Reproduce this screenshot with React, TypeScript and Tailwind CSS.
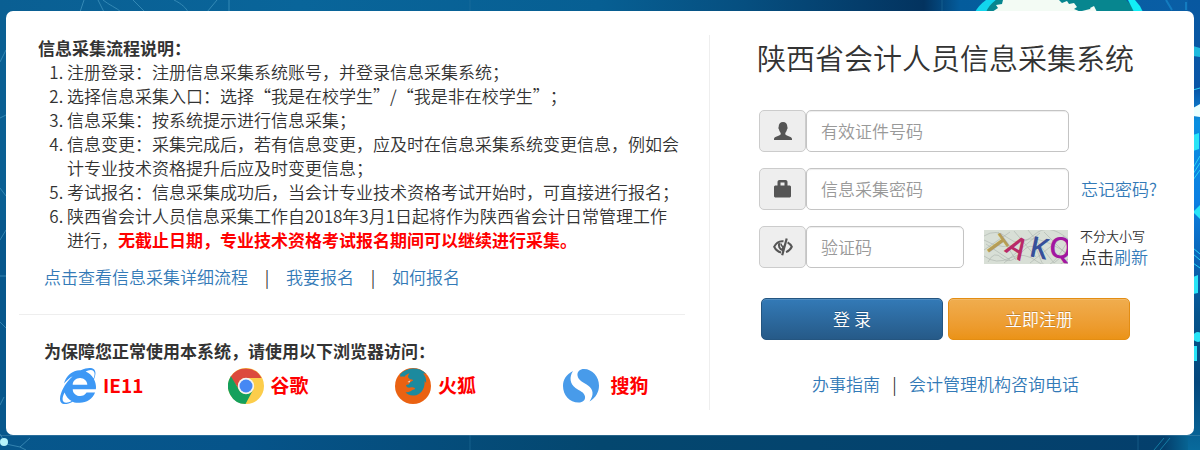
import React from "react";
import { FaInternetExplorer } from "react-icons/fa";

const link = "text-[#337ab7] hover:underline";

function Backdrop() {
  return (
    <svg
      aria-hidden="true"
      className="absolute inset-0 h-full w-full"
      viewBox="0 0 1200 450"
      preserveAspectRatio="none"
    >
      <defs>
        <linearGradient id="sky" x1="0" x2="1" y1="0" y2="0">
          <stop offset="0" stopColor="#0a5f93" />
          <stop offset="0.25" stopColor="#09659a" />
          <stop offset="0.5" stopColor="#075f93" />
          <stop offset="0.62" stopColor="#064f80" />
          <stop offset="0.77" stopColor="#03335f" />
          <stop offset="0.8" stopColor="#045c9c" />
          <stop offset="1" stopColor="#0a5ea6" />
        </linearGradient>
        <linearGradient id="ground" x1="0" x2="1" y1="0" y2="0">
          <stop offset="0" stopColor="#07578c" />
          <stop offset="0.2" stopColor="#06548a" />
          <stop offset="0.5" stopColor="#04476f" />
          <stop offset="0.97" stopColor="#043f6c" />
          <stop offset="1" stopColor="#0876a6" />
        </linearGradient>
        <linearGradient id="rightEdge" x1="0" x2="0" y1="0" y2="1">
          <stop offset="0" stopColor="#0858a0" />
          <stop offset="0.2" stopColor="#0a56a8" />
          <stop offset="0.27" stopColor="#0a8fe0" />
          <stop offset="0.45" stopColor="#0b7fe2" />
          <stop offset="0.58" stopColor="#0a63b4" />
          <stop offset="0.7" stopColor="#06548c" />
          <stop offset="0.85" stopColor="#04477c" />
          <stop offset="1" stopColor="#086a9c" />
        </linearGradient>
      </defs>
      <rect width="1200" height="220" fill="url(#sky)" />
      <rect y="220" width="1200" height="230" fill="url(#ground)" />
      <rect x="1188" width="12" height="450" fill="url(#rightEdge)" />
      <g fill="none" stroke="#5fb0d4" strokeWidth="1" opacity="0.5">
        <path d="M84 0l-4 12M98 0l6 12M103 0c6 5 14 8 18 12M133 0l12 12M174 0c8 4 12 8 14 12M217 0l-10 12M229 0v12" />
        <path d="M0 62l6 -12M0 118l6 -3M0 188l6 8M0 240l6 -10M0 276h6M0 322l6 6M0 405l4 -8M0 434l6 10 14 3 10-9M20 447l6 3" />
      </g>
      <path d="M470 0v12M942 0v12M470 435v15M1138 435v15" stroke="#27749f" opacity="0.5" />
      <circle cx="4" cy="442" r="4" fill="#b6f3fb" />
      <path d="M975 12q4-7 11-12h10l-10 12z" fill="#12d6ee" />
      <path d="M986 12q3-7 10-12h130l12 12z" fill="#07868f" />
      <path d="M1128 0h7q5 5 8 12h-9z" fill="#12eef6" />
      <path
        d="M992 12l6-4-2-3 6-1 1-4h56l3 3 5-2 2 3 5-1 3 4-3 2 7 3h-4l7 0z"
        fill="#f3fbf4"
      />
      <path d="M1090 8l4-2 3 6h-5zM1082 11l8-2 6 3z" fill="#f3fbf4" />
      <path d="M1166 0l6 10M1186 2v8" stroke="#1d9bdc" strokeWidth="2" opacity="0.5" />
      <g fill="#29e4f7">
        <path d="M1193 46l7 2v9l-7-1z" opacity="0.7" />
        <path d="M1193 108l7-4v13l-7-1z" fill="#e9ffff" />
        <path d="M1193 135l6-2v16l-6 2z" />
        <path d="M1193 212l7-7v14z" />
        <path d="M1193 277l5-2v18l-5 1z" />
        <circle cx="1198" cy="337" r="5" />
        <path d="M1193 346h4v15h-4z" />
      </g>
      <g fill="none" stroke="#2cd3f4" strokeWidth="1">
        <path d="M1193 90l7-2M1193 168l7-12M1193 174l7-11M1193 180l7-10M1193 248l7 6M1193 254l7 6M1193 263l7 5" />
        <path d="M1154 450l10-12M1160 450l10-12" opacity="0.4" />
      </g>
      <rect y="435" width="1200" height="1" fill="#5c93b3" opacity="0.4" />
    </svg>
  );
}

function UserIcon() {
  return (
    <svg viewBox="0 0 18 18" className="h-[18px] w-[18px]" fill="#555">
      <path d="M9 0C6.3 0 4.7 1.9 4.7 4.6c0 .7-.3.7-.3 1.4 0 .8.5 1 .7 1.8.3 1.4.9 2.3 1.6 3.2v1.300C6.500 13.900 0 14.300 0 17v1h18v-1c0-2.700-6.500-3.100-6.700-4.700V11c.7-.9 1.3-1.8 1.6-3.200.2-.8.7-1 .7-1.800 0-.7-.3-.7-.3-1.400C13.300 1.900 11.700 0 9 0z" />
    </svg>
  );
}

function LockIcon() {
  return (
    <svg viewBox="0 0 18 18" className="h-[18px] w-[18px]" fill="#555">
      <path
        fillRule="evenodd"
        d="M3.500 5.500V2C3.500.8 4.300 0 5.500 0h6c1.200 0 2 .8 2 2v3.500H16l1 1V16.500l-1 1H1l-1-1v-10l1-1zM6.500 5.500h4V2.500h-4z"
      />
    </svg>
  );
}

function EyeClosedIcon() {
  return (
    <svg viewBox="0 0 20 18" className="h-[18px] w-5" fill="none" stroke="#555">
      <path d="M10.500 3.300C6.500 2.700 3 5.200 1.200 8.800c1.400 2.900 4 5 6.900 5.700" strokeWidth="2" />
      <path d="M14.600 4.300c1.900 1 3.300 2.600 4.200 4.500-1.200 2.500-3.200 4.400-5.800 5.300" strokeWidth="2" />
      <path d="M6.500 5c-1.600 3 .2 6.200 3 7l1-4.200" strokeWidth="2" />
      <path d="M8.200 5.500c-.3 1.600.4 2.800 2 3.200" strokeWidth="1.500" />
      <path d="M13.700.5L9.200 17.300" strokeWidth="2.200" />
    </svg>
  );
}

function ChromeIcon() {
  return (
    <svg viewBox="0 0 36 36" className="h-9 w-9 shrink-0">
      <circle cx="18" cy="18" r="18" fill="#fccd4b" />
      <path d="M2.400 9A18 18 0 0 1 33.600 10H18a8 8 0 0 0-7.500 10.500z" fill="#dc4a3d" />
      <path d="M2.900 8.200A18 18 0 0 0 17.500 36L25 22a8 8 0 0 1-14.400-.9z" fill="#14a05c" />
      <circle cx="18" cy="18" r="8.200" fill="#f4f4f4" />
      <circle cx="18" cy="18" r="6.500" fill="#4688f4" />
    </svg>
  );
}

function FirefoxIcon() {
  return (
    <svg viewBox="0 0 36 36" className="h-9 w-9 shrink-0">
      <circle cx="18" cy="18" r="18" fill="#ea6212" />
      <path
        d="M5 6.500A18 18 0 0 1 31 5.500l-3 0c3 3 3.500 7 3 9.500-.5-1-1-1.600-1.500-2 .8 7-3.500 14-10.500 14.500-4 .3-7-1.300-8.500-3.500 3 .6 5-.3 6.500-1.700 1.500-1.200 2.800-.5 3-1.300.2-1-1.500-2.300-3.800-1.700-2.500.7-4.200.5-5.200-1.800.5-1 1.500-1.300 3-1l.5-1.800 3.500-2.200c.5-1-2-1.200-3-1.200l-2-2c0-1.500.7-3 1.700-4-2.500.6-4.200 2-5.200 3.400C7.800 8.500 6.500 8.500 5.500 9z"
        fill="#1c8a9e"
      />
      <path d="M12.500 14l3-1.800-1 2.300z" fill="#f3dcc5" />
    </svg>
  );
}

function SogouIcon() {
  return (
    <svg viewBox="0 0 36 36" className="h-9 w-9 shrink-0" fill="#489bea">
      <path d="M10 3C3 6.500 0 12 0 18c0 9 6.500 16.500 15.500 16.500 4.500 0 7-2.500 6.500-6-.7-4.500-5.500-5.500-9.500-8.500C7 16 6 9 10 3z" />
      <path d="M14.500 7.500C14 3.500 17 1 21 1c8.500 0 15 8 15 16.500 0 6.500-3 12-9.500 16C31 27 30.500 21.500 25 17.500 20.500 14.300 15.200 12.500 14.500 7.500z" />
    </svg>
  );
}

function Captcha() {
  return (
    <svg
      role="img"
      aria-label="验证码图片"
      viewBox="0 0 84 34"
      className="h-[34px] w-[84px] shrink-0"
    >
      <rect width="84" height="34" fill="#d8dfd6" />
      <g fill="none" stroke="#a3aaa4" strokeWidth="0.5">
        <path d="M0 6q12-8 24 2t26-3 34 4M0 26q12 9 26 2t28 4 30-3M2 14l24 16M14 2l18 28M30 1l22 26M44 0l26 33M60 2l22 22M0 20L26 2M20 33L56 3M46 33L80 6M70 33l14-12" />
        <path d="M4 32q6-12 14-4t20-6 18 6 26-14M0 10q20 12 36 2t48 12" />
      </g>
      <g
        fontFamily="'Open Sans', 'Noto Sans', sans-serif"
        fontWeight="600"
        fontSize="29"
        textAnchor="middle"
      >
        <text transform="translate(4 21) rotate(54)" fill="#b59d56">T</text>
        <text transform="translate(28 26) rotate(32)" fill="#b92a68">A</text>
        <text transform="translate(53 28) rotate(12)" fill="#36509a">K</text>
        <text transform="translate(76 28) rotate(4)" fill="#a217a0">Q</text>
      </g>
    </svg>
  );
}

interface FieldProps {
  id: string;
  label: string;
  type?: string;
  width: string;
  icon: React.ReactNode;
}

function Field({ id, label, type = "text", width, icon }: FieldProps) {
  return (
    <div className={`flex h-[42px] ${width}`}>
      <label
        htmlFor={id}
        aria-label={label}
        className="flex w-[47px] shrink-0 items-center justify-center rounded-[5px] border border-[#ccc] bg-[#eee]"
      >
        {icon}
      </label>
      <input
        id={id}
        type={type}
        placeholder={label}
        className="min-w-0 flex-1 rounded-[5px] border border-[#c4c4c4] bg-white px-[14px] text-[17px] font-[350] shadow-[inset_0_1px_1px_rgba(0,0,0,0.075)] outline-none placeholder:text-[#999]"
      />
    </div>
  );
}

const steps: React.ReactNode[] = [
  "注册登录：注册信息采集系统账号，并登录信息采集系统；",
  "选择信息采集入口：选择“我是在校学生”/“我是非在校学生”；",
  "信息采集：按系统提示进行信息采集；",
  "信息变更：采集完成后，若有信息变更，应及时在信息采集系统变更信息，例如会计专业技术资格提升后应及时变更信息；",
  "考试报名：信息采集成功后，当会计专业技术资格考试开始时，可直接进行报名；",
  <>
    陕西省会计人员信息采集工作自2018年3月1日起将作为陕西省会计日常管理工作进行，
    <strong className="font-bold text-[#f00]">
      无截止日期，专业技术资格考试报名期间可以继续进行采集。
    </strong>
  </>,
];

const browsers = [
  { name: "IE11", icon: <FaInternetExplorer className="h-9 w-9 shrink-0 text-[#3d98f5]" />, gap: "gap-[7px]" },
  { name: "谷歌", icon: <ChromeIcon />, gap: "gap-[7px]" },
  { name: "火狐", icon: <FirefoxIcon />, gap: "gap-[7px]" },
  { name: "搜狗", icon: <SogouIcon />, gap: "gap-3" },
];

const buttonBase =
  "h-[42px] flex-1 rounded-[5px] border text-[17px] text-white shadow-[inset_0_1px_0_rgba(255,255,255,0.15)] [text-shadow:0_-1px_0_rgba(0,0,0,0.2)]";

export default function App() {
  return (
    <div
      lang="zh-CN"
      className="relative flex min-h-screen flex-col bg-[#075a8f] px-[6px] pt-[11px] pb-[15px] font-['Noto_Sans_CJK_SC',sans-serif] text-[17px] leading-6 font-[350] text-[#333] [text-spacing-trim:space-all]"
    >
      <Backdrop />
      <main className="relative flex flex-1 rounded-[7px] bg-white pt-6 pb-[25px]">
        <section className="min-w-0 flex-1 border-r border-[#eee] pr-6 pl-[13px]">
          <h2 className="pt-px pl-[19px] font-bold">信息采集流程说明：</h2>
          <ol className="list-decimal pr-1 pl-12">
            {steps.map((step, i) => (
              <li key={i}>{step}</li>
            ))}
          </ol>
          <nav className="mt-[13px] flex pl-[25px]">
            <a href="#process" className={link}>点击查看信息采集详细流程</a>
            <span className="w-[38px] text-center">|</span>
            <a href="#apply" className={link}>我要报名</a>
            <span className="w-[38px] text-center">|</span>
            <a href="#how" className={link}>如何报名</a>
          </nav>
          <hr className="mt-[25px] border-[#eee]" />
          <h2 className="mt-6 pl-[25px] font-bold">
            为保障您正常使用本系统，请使用以下浏览器访问：
          </h2>
          <ul className="mt-[5px] -mr-[45px] grid grid-cols-4 pl-[41px] text-[19px] font-bold text-[#f00]">
            {browsers.map((b) => (
              <li key={b.name} className={`flex items-center ${b.gap}`}>
                {b.icon}
                <span className="pb-[3px]">{b.name}</span>
              </li>
            ))}
          </ul>
        </section>

        <section className="w-[484px] shrink-0 pr-16 pl-[47px]">
          <h1 className="pt-[2px] text-[29px] leading-10 whitespace-nowrap">
            陕西省会计人员信息采集系统
          </h1>
          <form className="mt-[33px] pl-[2px]" onSubmit={(e) => e.preventDefault()}>
            <div className="flex flex-col gap-4">
              <Field id="idno" label="有效证件号码" width="w-[310px]" icon={<UserIcon />} />
              <div className="flex items-center gap-3 whitespace-nowrap">
                <Field
                  id="password"
                  type="password"
                  label="信息采集密码"
                  width="w-[310px] shrink-0"
                  icon={<LockIcon />}
                />
                <a href="#forgot" className={link}>忘记密码?</a>
              </div>
              <div className="flex items-center whitespace-nowrap">
                <Field id="captcha" label="验证码" width="w-[205px] shrink-0" icon={<EyeClosedIcon />} />
                <span className="ml-5 flex">
                  <Captcha />
                </span>
                <p className="ml-3 flex flex-col justify-center">
                  <span className="text-[13px] leading-5">不分大小写</span>
                  <span className="leading-[22px]">
                    点击<a href="#refresh" className={link}>刷新</a>
                  </span>
                </p>
              </div>
            </div>
            <div className="mt-[30px] flex gap-[5px] pl-[2px]">
              <button
                type="submit"
                className={`${buttonBase} border-[#245580] bg-linear-to-b from-[#337ab7] to-[#265a88]`}
              >
                登 录
              </button>
              <button
                type="button"
                className={`${buttonBase} border-[#e38d13] bg-linear-to-b from-[#f0ad4e] to-[#eb9316]`}
              >
                立即注册
              </button>
            </div>
          </form>
          <nav className="mt-8 flex pl-[55px] whitespace-nowrap">
            <a href="#guide" className={link}>办事指南</a>
            <span className="w-[29px] text-center">|</span>
            <a href="#contacts" className={link}>会计管理机构咨询电话</a>
          </nav>
        </section>
      </main>
    </div>
  );
}
